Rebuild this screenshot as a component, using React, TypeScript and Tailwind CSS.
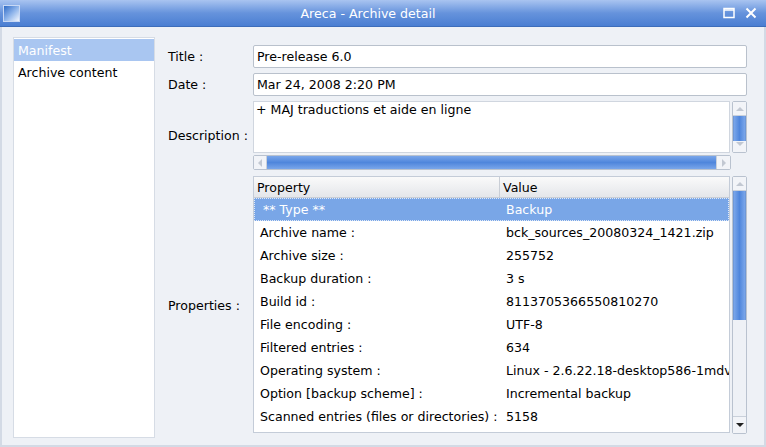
import React from "react";

const rows: [string, string][] = [
  ["Archive name :", "bck_sources_20080324_1421.zip"],
  ["Archive size :", "255752"],
  ["Backup duration :", "3 s"],
  ["Build id :", "8113705366550810270"],
  ["File encoding :", "UTF-8"],
  ["Filtered entries :", "634"],
  ["Operating system :", "Linux - 2.6.22.18-desktop586-1mdv"],
  ["Option [backup scheme] :", "Incremental backup"],
  ["Scanned entries (files or directories) :", "5158"],
];

function Arrow({ dir, dark }: { dir: "up" | "down" | "left" | "right"; dark?: boolean }) {
  const pts =
    dir === "up" ? "0,4 4,0 8,4" : dir === "down" ? "0,0 8,0 4,4" : dir === "left" ? "4,0 4,8 0,4" : "0,0 0,8 4,4";
  const w = dir === "up" || dir === "down" ? 8 : 4;
  const h = dir === "up" || dir === "down" ? 4 : 8;
  return (
    <svg width={w} height={h} viewBox={`0 0 ${w} ${h}`}>
      <polygon points={pts} fill={dark ? "#202020" : "#c2c8d2"} />
    </svg>
  );
}

function VScroll({ thumbTop, thumbH, downDark }: { thumbTop: number; thumbH: number; downDark?: boolean }) {
  return (
    <div className="w-[15px] h-full flex flex-col border border-[#b9c2cf] rounded-[2px] bg-[#eef1f6]">
      <div className="h-[14px] flex items-center justify-center border-b border-[#c9d0da] bg-[#f2f4f8]">
        <Arrow dir="up" />
      </div>
      <div className="flex-1 relative">
        <div
          className="absolute left-0 right-0 bg-gradient-to-r from-[#7aa6ea] via-[#4f86dc] to-[#7aa6ea] border-x border-[#6e98d8]"
          style={{ top: thumbTop, height: thumbH }}
        />
      </div>
      <div className="h-[17px] flex items-center justify-center border-t border-[#c9d0da] bg-[#f2f4f8]">
        <Arrow dir="down" dark={downDark} />
      </div>
    </div>
  );
}

export default function App() {
  return (
    <div
      className="w-[766px] h-[447px] flex flex-col bg-[#eef1f6] text-[12.6px] text-black overflow-hidden"
      style={{ fontFamily: '"DejaVu Sans", sans-serif' }}
    >
      {/* Title bar */}
      <div className="h-[27px] relative flex items-center bg-gradient-to-b from-[#a9c4f0] via-[#6693dc] to-[#4a7ed2] border-b border-[#3d6dba] shrink-0">
        <div className="ml-[3px] w-[17px] h-[17px] border border-[#c8d8f4] bg-gradient-to-br from-[#2e6bc6] via-[#8db3ea] to-[#f2f6fc]" />
        <div className="absolute inset-0 flex items-center justify-center text-white text-[12.6px] pr-[30px] pt-[2px]">
          Areca - Archive detail
        </div>
        <div className="ml-auto mr-[9px] flex items-center gap-[10px]">
          <svg width="12" height="12" viewBox="0 0 12 12">
            <rect x="1" y="1.5" width="10" height="9" fill="none" stroke="white" strokeWidth="1.5" />
            <line x1="1" y1="3" x2="11" y2="3" stroke="white" strokeWidth="1.5" />
          </svg>
          <svg width="12" height="12" viewBox="0 0 12 12">
            <path d="M1.5 1.5 L10.5 10.5 M10.5 1.5 L1.5 10.5" stroke="white" strokeWidth="2" />
          </svg>
        </div>
      </div>

      {/* Body */}
      <div className="flex-1 flex border-x-[2px] border-b-[2px] border-[#d3dae5] min-h-0">
        {/* Left list */}
        <div className="shrink-0 ml-[11px] mt-[10px] mb-[7px] w-[142px] bg-white border border-[#d6dce5] pt-[1px] flex flex-col">
          <div className="h-[22px] bg-[#a9c6f1] text-white pl-[4px] pt-[2px] flex items-center">Manifest</div>
          <div className="h-[23px] pl-[4px] pt-[2px] flex items-center">Archive content</div>
        </div>

        {/* Right form */}
        <div className="flex-1 min-w-0 ml-[13px] mr-[17px] pt-[18px] pb-[9px] grid grid-cols-[85px_minmax(0,1fr)] grid-rows-[23px_23px_69px_1fr] gap-y-[5px] min-h-0">
          <div className="flex items-center pt-[2px]">Title :</div>
          <div className="bg-white border border-[#b9c1cc] rounded-[2px] flex items-center pl-[3px] pt-[1px]">Pre-release 6.0</div>

          <div className="flex items-center pt-[2px]">Date :</div>
          <div className="bg-white border border-[#b9c1cc] rounded-[2px] flex items-center pl-[3px] pt-[1px]">Mar 24, 2008 2:20 PM</div>

          <div className="flex items-center pt-[2px]">Description :</div>
          <div className="flex flex-col gap-[2px]">
            <div className="h-[53px] flex gap-[2px]">
              <div className="flex-1 bg-white border border-[#d0d6df] pl-[2px] leading-[15px]">+ MAJ traductions et aide en ligne</div>
              <VScroll thumbTop={0} thumbH={25} />
            </div>
            <div className="h-[15px] w-[478px] flex border border-[#b9c2cf] rounded-[2px] bg-[#eef1f6]">
              <div className="w-[13px] flex items-center justify-center border-r border-[#c9d0da] bg-[#f2f4f8]">
                <Arrow dir="left" />
              </div>
              <div className="flex-1 bg-gradient-to-b from-[#7aa6ea] via-[#4f86dc] to-[#7aa6ea]" />
              <div className="w-[14px] flex items-center justify-center border-l border-[#c9d0da] bg-[#f2f4f8]">
                <Arrow dir="right" />
              </div>
            </div>
          </div>

          <div className="flex items-center mt-[1px] pt-[1px]">Properties :</div>
          <div className="flex gap-[2px] mt-[1px] min-h-0 min-w-0">
            <div className="flex-1 min-w-0 bg-white border border-[#c4ccd8] flex flex-col overflow-hidden mb-[3px]">
              <div className="h-[21px] flex bg-gradient-to-b from-[#fafafa] to-[#e4e6ea] border-b border-[#c9ced6] shrink-0">
                <div className="w-[246px] border-r border-[#c9ced6] pl-[3px] pt-[2px] flex items-center">Property</div>
                <div className="flex-1 pl-[3px] pt-[2px] flex items-center">Value</div>
              </div>
              <div className="h-[23px] flex bg-[#79a6e7] text-white border border-dotted border-[#dfe9f8] shrink-0">
                <div className="w-[246px] pl-[8px] pt-[1px] flex items-center">** Type **</div>
                <div className="flex-1 pl-[5px] pt-[1px] flex items-center">Backup</div>
              </div>
              {rows.map(([k, v]) => (
                <div key={k} className="h-[23px] flex shrink-0">
                  <div className="w-[247px] shrink-0 pl-[6px] pt-[2px] flex items-center whitespace-nowrap">{k}</div>
                  <div className="flex-1 min-w-0 pl-[5px] pt-[2px] flex items-center whitespace-nowrap overflow-hidden">{v}</div>
                </div>
              ))}
            </div>
            <div className="h-[258px] shrink-0">
              <VScroll thumbTop={0} thumbH={129} downDark />
            </div>
          </div>
        </div>
      </div>
    </div>
  );
}
